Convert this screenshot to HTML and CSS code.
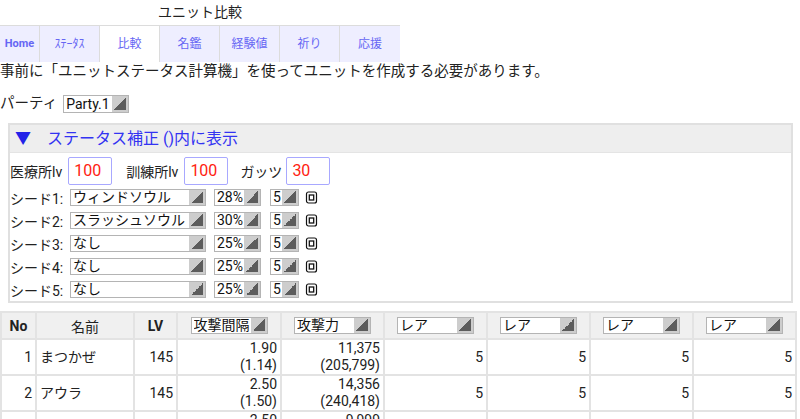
FILE: index.html
```html
<!DOCTYPE html>
<html lang="ja">
<head>
    <meta charset="UTF-8">
    <title>ユニット比較</title>
    <link rel="stylesheet" href="styles.css">
</head>
<body>
<div class="head">
    <h1 class="title">ユニット比較</h1>
    <ul class="tabs">
        <li class="home"><a href="#">Home</a></li>
        <li><a href="#">ｽﾃｰﾀｽ</a></li>
        <li class="active"><a href="#">比較</a></li>
        <li><a href="#">名鑑</a></li>
        <li><a href="#">経験値</a></li>
        <li><a href="#">祈り</a></li>
        <li><a href="#">応援</a></li>
    </ul>
</div>

<p class="notice">事前に「ユニットステータス計算機」を使ってユニットを作成する必要があります。</p>

<div class="party">パーティ <select class="sel party-sel"><option>Party.1</option></select></div>

<div class="panel">
    <div class="panel-head"><span class="tri">▼</span>ステータス補正 ()内に表示</div>
    <div class="panel-body">
        <div class="facility">
            <label>医療所lv<input class="num" value="100"></label>
            <label class="train">訓練所lv<input class="num" value="100"></label>
            <label class="guts">ガッツ<input class="num" value="30"></label>
        </div>
        <div class="seed">
            <span class="seed-label">シード1:</span>
            <select class="sel seed-name"><option>ウィンドソウル</option></select>
            <select class="sel seed-pct"><option>28%</option></select>
            <select class="sel seed-lv"><option>5</option></select>
            <svg class="lock" width="13" height="13" viewBox="0 0 13 13"><rect x="1.5" y="1" width="10" height="11" rx="2" fill="none" stroke="#111" stroke-width="1.2"/><rect x="4.3" y="4" width="4.4" height="5" fill="none" stroke="#111" stroke-width="1.3"/></svg>
        </div>
        <div class="seed">
            <span class="seed-label">シード2:</span>
            <select class="sel seed-name"><option>スラッシュソウル</option></select>
            <select class="sel seed-pct"><option>30%</option></select>
            <select class="sel seed-lv"><option>5</option></select>
            <svg class="lock" width="13" height="13" viewBox="0 0 13 13"><rect x="1.5" y="1" width="10" height="11" rx="2" fill="none" stroke="#111" stroke-width="1.2"/><rect x="4.3" y="4" width="4.4" height="5" fill="none" stroke="#111" stroke-width="1.3"/></svg>
        </div>
        <div class="seed">
            <span class="seed-label">シード3:</span>
            <select class="sel seed-name"><option>なし</option></select>
            <select class="sel seed-pct"><option>25%</option></select>
            <select class="sel seed-lv"><option>5</option></select>
            <svg class="lock" width="13" height="13" viewBox="0 0 13 13"><rect x="1.5" y="1" width="10" height="11" rx="2" fill="none" stroke="#111" stroke-width="1.2"/><rect x="4.3" y="4" width="4.4" height="5" fill="none" stroke="#111" stroke-width="1.3"/></svg>
        </div>
        <div class="seed">
            <span class="seed-label">シード4:</span>
            <select class="sel seed-name"><option>なし</option></select>
            <select class="sel seed-pct"><option>25%</option></select>
            <select class="sel seed-lv"><option>5</option></select>
            <svg class="lock" width="13" height="13" viewBox="0 0 13 13"><rect x="1.5" y="1" width="10" height="11" rx="2" fill="none" stroke="#111" stroke-width="1.2"/><rect x="4.3" y="4" width="4.4" height="5" fill="none" stroke="#111" stroke-width="1.3"/></svg>
        </div>
        <div class="seed">
            <span class="seed-label">シード5:</span>
            <select class="sel seed-name"><option>なし</option></select>
            <select class="sel seed-pct"><option>25%</option></select>
            <select class="sel seed-lv"><option>5</option></select>
            <svg class="lock" width="13" height="13" viewBox="0 0 13 13"><rect x="1.5" y="1" width="10" height="11" rx="2" fill="none" stroke="#111" stroke-width="1.2"/><rect x="4.3" y="4" width="4.4" height="5" fill="none" stroke="#111" stroke-width="1.3"/></svg>
        </div>
    </div>
</div>

<table class="units">
    <colgroup>
        <col style="width:35px"><col style="width:98px"><col style="width:43px">
        <col style="width:104px"><col style="width:103px">
        <col style="width:103px"><col style="width:103px"><col style="width:103px"><col style="width:103px">
    </colgroup>
    <thead>
    <tr>
        <th class="b">No</th>
        <th>名前</th>
        <th class="b">LV</th>
        <th><select class="sel th-sel"><option>攻撃間隔</option></select></th>
        <th><select class="sel th-sel"><option>攻撃力</option></select></th>
        <th><select class="sel th-sel"><option>レア</option></select></th>
        <th><select class="sel th-sel"><option>レア</option></select></th>
        <th><select class="sel th-sel"><option>レア</option></select></th>
        <th><select class="sel th-sel"><option>レア</option></select></th>
    </tr>
    </thead>
    <tbody>
    <tr>
        <td class="r">1</td><td>まつかぜ</td><td class="r">145</td>
        <td class="r">1.90<br>(1.14)</td><td class="r">11,375<br>(205,799)</td>
        <td class="r">5</td><td class="r">5</td><td class="r">5</td><td class="r">5</td>
    </tr>
    <tr>
        <td class="r">2</td><td>アウラ</td><td class="r">145</td>
        <td class="r">2.50<br>(1.50)</td><td class="r">14,356<br>(240,418)</td>
        <td class="r">5</td><td class="r">5</td><td class="r">5</td><td class="r">5</td>
    </tr>
    <tr>
        <td class="r">3</td><td>シルフ</td><td class="r">145</td>
        <td class="r">2.50<br>(1.50)</td><td class="r">9,999<br>(180,000)</td>
        <td class="r">5</td><td class="r">5</td><td class="r">5</td><td class="r">5</td>
    </tr>
    </tbody>
</table>
</body>
</html>
```

FILE: styles.css
```css
*{
    margin: 0;
    padding: 0;
    list-style: none;
    box-sizing: border-box;
}
body{
    font-family: Roboto, "Noto Sans CJK JP", sans-serif;
    color: #222;
    background: #fff;
    width: 800px;
}
.head{
    width: 400px;
}
.title{
    font-size: 14px;
    font-weight: normal;
    line-height: 25px;
    height: 25px;
    text-align: center;
}
.tabs{
    display: flex;
    height: 37px;
    border-top: 1px solid #dcdcdc;
}
.tabs li{
    width: 60px;
    background: #eeeeff;
    border-right: 1px solid #dcdcdc;
}
.tabs li.home{
    width: 40px;
}
.tabs li:last-child{
    border-right: 0;
}
.tabs li.active{
    background: #fff;
}
.tabs a{
    display: block;
    height: 36px;
    line-height: 36px;
    text-align: center;
    font-size: 12px;
    color: #6666f4;
    text-decoration: none;
}
.tabs .home a{
    font-size: 11px;
    font-weight: bold;
}

.notice{
    font-size: 14.5px;
    line-height: 20px;
}
.party{
    margin-top: 12px;
    font-size: 14.5px;
    line-height: 20px;
    height: 20px;
    display: flex;
    align-items: center;
}
.party-sel{
    margin-left: 6px;
    width: 66px;
    height: 18px;
    font-size: 15px;
}

/* select with the grey arrow block */
.sel{
    -webkit-appearance: none;
    appearance: none;
    border: 1px solid #b4b4b4;
    border-radius: 0;
    color: #111;
    font-family: Roboto, "Noto Sans CJK JP", sans-serif;
    font-size: 14px;
    line-height: 15px;
    padding: 0 16px 0 2px;
    background:
        linear-gradient(to bottom right, transparent 50%, #5c5c5c 50%) no-repeat right 2px bottom 2px / 12px 12px,
        linear-gradient(#cdcdcd, #cdcdcd) no-repeat right top / 16px 100%,
        #fff;
}

.panel{
    margin: 9px 7px 0 8px;
    border: 2px solid #e0e0e0;
}
.panel-head{
    height: 28px;
    line-height: 27px;
    background: #eeeeee;
    border-bottom: 1px solid #e4e4e4;
    color: #3333f2;
    font-size: 16px;
    padding-left: 5px;
}
.panel-head .tri{
    color: #2222e8;
    margin-right: 16px;
}
.panel-body{
    padding: 2px 0 0 0;
}
.facility{
    display: flex;
    align-items: center;
    height: 31px;
    font-size: 14px;
}
.facility label{
    display: flex;
    align-items: center;
    margin-right: 14px;
}
.facility .train{
    margin-right: 12px;
}
.num{
    width: 44px;
    height: 28px;
    margin-left: 6px;
    border: 1px solid #a8a8ff;
    border-radius: 2px;
    color: #f21;
    font-family: Roboto, sans-serif;
    font-size: 16px;
    padding-left: 5px;
    outline: none;
}
.facility .guts .num{
    margin-left: 4px;
}
.seed{
    display: flex;
    align-items: center;
    height: 23px;
    font-size: 14px;
}
.seed-label{
    width: 60px;
}
.seed-name{
    width: 136px;
    height: 17px;
    margin-right: 8px;
}
.seed-pct{
    width: 47px;
    height: 17px;
    margin-right: 9px;
}
.seed-lv{
    width: 29px;
    height: 17px;
    margin-right: 6px;
}
.lock{
    display: block;
}

.units{
    margin-top: 8px;
    width: 795px;
    border-collapse: collapse;
    table-layout: fixed;
    font-size: 14px;
}
.units th, .units td{
    border: 2px solid #e3e3e3;
}
.units th{
    height: 27px;
    background: #f0f0f0;
    font-weight: normal;
    text-align: center;
    padding: 0;
}
.units th.b{
    font-weight: bold;
}
.th-sel{
    width: 77px;
    height: 17px;
    display: block;
    margin: 0 auto;
}
.units td{
    height: 35px;
    line-height: 17px;
    padding: 0 3px;
    white-space: nowrap;
}
.units td.r{
    text-align: right;
}
```
